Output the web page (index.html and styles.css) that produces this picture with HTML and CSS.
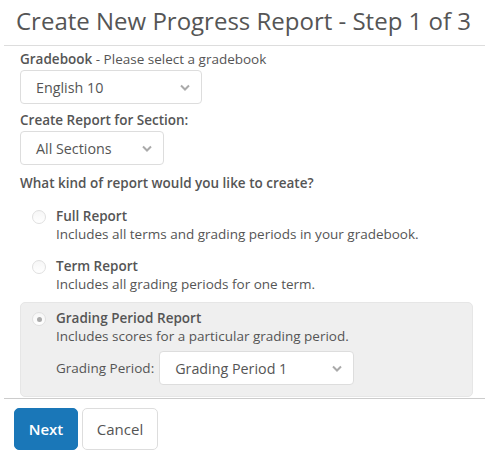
FILE: index.html
```html
<!DOCTYPE html>
<html lang="en">
<head>
    <meta charset="UTF-8">
    <title>Create New Progress Report</title>
    <link rel="stylesheet" href="styles.css">
</head>
<body>
    <h1 class="title">Create New Progress Report - Step 1 of 3</h1>

    <div class="content">
        <div class="field-label"><b>Gradebook</b> - Please select a gradebook</div>
        <div class="select select-gradebook">
            <span>English 10</span>
            <svg class="chevron" width="10" height="7" viewBox="0 0 10 7"><path d="M1 1.5 L5 5.5 L9 1.5" fill="none" stroke="#aaa" stroke-width="2"/></svg>
        </div>

        <div class="field-label strong">Create Report for Section:</div>
        <div class="select select-section">
            <span>All Sections</span>
            <svg class="chevron" width="10" height="7" viewBox="0 0 10 7"><path d="M1 1.5 L5 5.5 L9 1.5" fill="none" stroke="#aaa" stroke-width="2"/></svg>
        </div>

        <div class="field-label strong question">What kind of report would you like to create?</div>

        <div class="option first">
            <span class="radio"></span>
            <div class="option-text">
                <div class="option-title">Full Report</div>
                <div class="option-desc">Includes all terms and grading periods in your gradebook.</div>
            </div>
        </div>

        <div class="option">
            <span class="radio"></span>
            <div class="option-text">
                <div class="option-title">Term Report</div>
                <div class="option-desc">Includes all grading periods for one term.</div>
            </div>
        </div>

        <div class="option selected">
            <span class="radio checked"></span>
            <div class="option-text">
                <div class="option-title">Grading Period Report</div>
                <div class="option-desc">Includes scores for a particular grading period.</div>
                <div class="period-row">
                    <span>Grading Period:</span>
                    <div class="select select-period">
                        <span>Grading Period 1</span>
                        <svg class="chevron" width="10" height="7" viewBox="0 0 10 7"><path d="M1 1.5 L5 5.5 L9 1.5" fill="none" stroke="#aaa" stroke-width="2"/></svg>
                    </div>
                </div>
            </div>
        </div>
    </div>

    <div class="footer">
        <button class="btn btn-primary">Next</button>
        <button class="btn">Cancel</button>
    </div>
</body>
</html>
```

FILE: styles.css
```css
body {
    margin: 0;
    font-family: "Open Sans", Arial, sans-serif;
    color: #555;
    font-size: 13.5px;
    background: #fff;
}
.title {
    margin: 0 0 0 4px;
    padding: 4px 0 0 12px;
    height: 41px;
    font-size: 24px;
    font-weight: normal;
    color: #555;
    line-height: 34px;
    border-bottom: 1px solid #ddd;
}
.content {
    margin-left: 4px;
    padding: 3px 12px 1px 16px;
    border-bottom: 1px solid #ccc;
}
.field-label {
    line-height: 20px;
}
.field-label b, .strong {
    font-weight: 600;
}
.question {
    margin-top: 8px;
}
.select {
    display: flex;
    align-items: center;
    justify-content: space-between;
    box-sizing: border-box;
    height: 34px;
    border: 1px solid #ddd;
    border-radius: 4px;
    padding: 0 11px 0 15px;
    font-size: 14.3px;
    background: #fff;
    margin: 1px 0 6px;
}
.select-gradebook { width: 182px; }
.select-section { width: 144px; }
.chevron { display: block; }
.option {
    display: flex;
    align-items: flex-start;
    padding: 3px 0 3px 12px;
    margin-top: 9px;
}
.option.first { margin-top: 12px; }
.option.selected {
    background: #efefef;
    border: 1px solid #e6e6e6;
    border-radius: 5px;
    padding: 7px 0 11px 11px;
    margin-top: 6px;
}
.radio {
    flex: none;
    box-sizing: border-box;
    width: 14px;
    height: 14px;
    border-radius: 50%;
    border: 1px solid #e0e0e0;
    background: linear-gradient(#f6f6f6, #fff);
    margin-top: 2px;
    margin-right: 10px;
    position: relative;
}
.radio.checked::after {
    content: "";
    position: absolute;
    left: 3.5px;
    top: 3.5px;
    width: 5px;
    height: 5px;
    border-radius: 50%;
    background: #aaa;
}
.option-title {
    font-weight: 600;
    line-height: 17px;
}
.option-desc {
    line-height: 18px;
}
.period-row {
    display: flex;
    align-items: center;
    margin-top: 6px;
}
.select-period {
    width: 195px;
    margin: 0 0 0 5px;
}
.footer {
    display: flex;
    gap: 4px;
    padding: 9px 0 0 14px;
}
.btn {
    box-sizing: border-box;
    height: 42px;
    width: 76px;
    border: 1px solid #ddd;
    border-radius: 5px;
    background: #fff;
    font-family: "Open Sans", Arial, sans-serif;
    font-size: 15px;
    color: #555;
    padding: 0;
}
.btn-primary {
    width: 64px;
    background: #1a77b8;
    border-color: #1a77b8;
    color: #fff;
    font-weight: 600;
}
```
